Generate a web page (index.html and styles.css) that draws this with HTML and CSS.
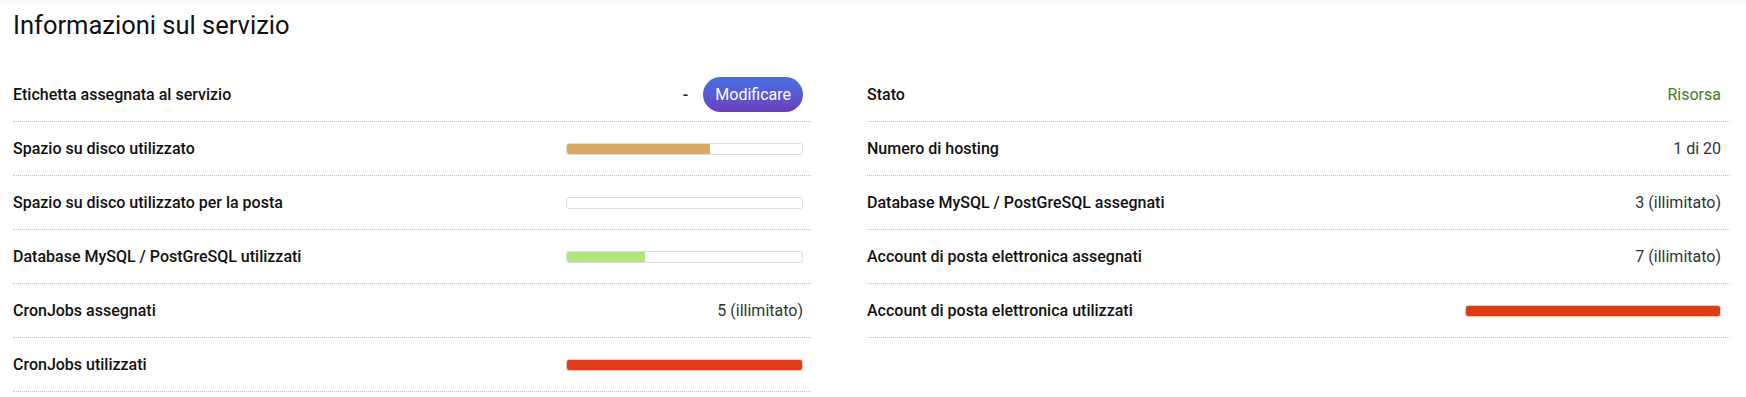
FILE: index.html
```html
<!DOCTYPE html>
<html lang="it">
<head>
<meta charset="utf-8">
<title>Informazioni sul servizio</title>
<link rel="stylesheet" href="styles.css">
</head>
<body>
<div class="page">
  <h1 class="title">Informazioni sul servizio</h1>
  <div class="grid">
    <div class="col">
      <div class="row">
        <span class="label">Etichetta assegnata al servizio</span>
        <span class="value with-btn"><span class="dash">-</span><button class="btn">Modificare</button></span>
      </div>
      <div class="row">
        <span class="label">Spazio su disco utilizzato</span>
        <div class="bar"><div class="fill tan" style="width:61%"></div></div>
      </div>
      <div class="row">
        <span class="label">Spazio su disco utilizzato per la posta</span>
        <div class="bar"><div class="fill" style="width:0%"></div></div>
      </div>
      <div class="row">
        <span class="label">Database MySQL / PostGreSQL utilizzati</span>
        <div class="bar"><div class="fill green" style="width:33%"></div></div>
      </div>
      <div class="row">
        <span class="label">CronJobs assegnati</span>
        <span class="value">5 (illimitato)</span>
      </div>
      <div class="row">
        <span class="label">CronJobs utilizzati</span>
        <div class="bar full"><div class="fill red" style="width:100%"></div></div>
      </div>
    </div>
    <div class="col">
      <div class="row">
        <span class="label">Stato</span>
        <span class="value ok">Risorsa</span>
      </div>
      <div class="row">
        <span class="label">Numero di hosting</span>
        <span class="value">1 di 20</span>
      </div>
      <div class="row">
        <span class="label">Database MySQL / PostGreSQL assegnati</span>
        <span class="value">3 (illimitato)</span>
      </div>
      <div class="row">
        <span class="label">Account di posta elettronica assegnati</span>
        <span class="value">7 (illimitato)</span>
      </div>
      <div class="row">
        <span class="label">Account di posta elettronica utilizzati</span>
        <div class="bar full"><div class="fill red" style="width:100%"></div></div>
      </div>
    </div>
  </div>
</div>
</body>
</html>
```
FILE: styles.css
```css
html, body {
  margin: 0;
  padding: 0;
  background: #ffffff;
}
body {
  font-family: Roboto, "Liberation Sans", Arial, sans-serif;
  color: #111;
  background: linear-gradient(180deg, #f6f6f6 0px, #ffffff 6px);
}
.page {
  padding: 9px 0 0 13px;
}
.title {
  margin: 0;
  font-size: 25.5px;
  font-weight: 400;
  line-height: 32px;
  color: #111;
}
.grid {
  display: grid;
  grid-template-columns: 798px 863px;
  column-gap: 56px;
  margin-top: 27px;
  align-items: start;
}
.row {
  display: flex;
  align-items: center;
  justify-content: space-between;
  height: 53px;
  border-bottom: 1px dotted #c4c4c4;
  padding-right: 8px;
}
.col:last-child .row {
  padding-right: 9px;
}
.label {
  font-size: 16px;
  font-weight: 500;
  color: #111;
}
.value {
  font-size: 16px;
  color: #333;
}
.value.ok {
  color: #4a7a1f;
}
.with-btn {
  display: flex;
  align-items: center;
  gap: 15px;
}
.dash {
  color: #222;
  font-weight: 500;
}
.btn {
  font-family: inherit;
  font-size: 16px;
  color: #fff;
  border: 0;
  border-radius: 18px;
  height: 35px;
  padding: 0 12px;
  background: linear-gradient(180deg, #476fe3 0%, #5b58d0 55%, #6c3db7 100%);
}
.bar {
  width: 30%;
  height: 12px;
  box-sizing: border-box;
  border: 1px solid #dcdcdc;
  border-radius: 3px;
  background: #fff;
  overflow: hidden;
}
.bar.full {
  border-color: #f0c8bc;
}
.fill {
  height: 100%;
}
.fill.tan { background: #d7a962; }
.fill.green { background: #afe67b; }
.fill.red { background: #dd3c16; }
```
